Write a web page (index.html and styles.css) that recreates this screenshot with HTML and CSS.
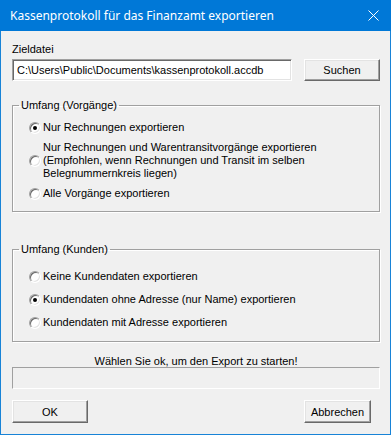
FILE: index.html
```html
<!DOCTYPE html>
<html lang="de">
<head>
    <meta charset="UTF-8">
    <meta name="viewport" content="width=device-width, initial-scale=1.0">
    <title>Kassenprotokoll für das Finanzamt exportieren</title>
    <link rel="stylesheet" href="styles.css">
</head>
<body>
    <div class="window">
        <div class="titlebar">
            <span class="title">Kassenprotokoll für das Finanzamt exportieren</span>
            <svg class="close" width="11" height="11" viewBox="0 0 11 11">
                <path d="M0.5 0.5 L10.5 10.5 M10.5 0.5 L0.5 10.5" stroke="#fff" stroke-width="1" fill="none"/>
            </svg>
        </div>

        <div class="content">
            <label class="field-label" for="target">Zieldatei</label>
            <div class="file-row">
                <input class="textbox" id="target" type="text" value="C:\Users\Public\Documents\kassenprotokoll.accdb">
                <button class="btn btn-search">Suchen</button>
            </div>

            <fieldset class="group group-vorgaenge">
                <legend>Umfang (Vorgänge)</legend>
                <label class="option">
                    <span class="radio checked"></span>
                    <span>Nur Rechnungen exportieren</span>
                </label>
                <label class="option">
                    <span class="radio"></span>
                    <span>Nur Rechnungen und Warentransitvorgänge exportieren<br>(Empfohlen, wenn Rechnungen und Transit im selben<br>Belegnummernkreis liegen)</span>
                </label>
                <label class="option">
                    <span class="radio"></span>
                    <span>Alle Vorgänge exportieren</span>
                </label>
            </fieldset>

            <fieldset class="group group-kunden">
                <legend>Umfang (Kunden)</legend>
                <label class="option">
                    <span class="radio"></span>
                    <span>Keine Kundendaten exportieren</span>
                </label>
                <label class="option">
                    <span class="radio checked"></span>
                    <span>Kundendaten ohne Adresse (nur Name) exportieren</span>
                </label>
                <label class="option">
                    <span class="radio"></span>
                    <span>Kundendaten mit Adresse exportieren</span>
                </label>
            </fieldset>

            <p class="status">Wählen Sie ok, um den Export zu starten!</p>
            <div class="progress"></div>

            <div class="actions">
                <button class="btn btn-ok">OK</button>
                <button class="btn btn-cancel">Abbrechen</button>
            </div>
        </div>
    </div>
</body>
</html>
```

FILE: styles.css
```css
* {
    box-sizing: border-box;
}
body {
    margin: 0;
    font-family: "Liberation Sans", Arial, sans-serif;
    font-size: 11px;
    color: #000;
    background: #f0f0f0;
}
.window {
    width: 391px;
    height: 435px;
    background: #f0f0f0;
    border: 1px solid #1883d7;
    border-top: none;
}
.titlebar {
    height: 31px;
    margin: 0 -1px;
    padding: 0 12px 0 10px;
    background: #0078d7;
    color: #fff;
    display: flex;
    align-items: center;
    justify-content: space-between;
}
.title {
    font-family: "Noto Sans", sans-serif;
    font-size: 12px;
}
.close {
    display: block;
}
.content {
    padding: 0 10px 0 11px;
}
.field-label {
    display: block;
    margin-top: 12px;
    line-height: 13px;
}
.file-row {
    display: flex;
    justify-content: space-between;
    margin-top: 3px;
}
.textbox {
    width: 280px;
    height: 22px;
    padding: 0 0 0 4px;
    font: inherit;
    color: #000;
    background: #fff;
    border: 1px solid;
    border-color: #a0a0a0 #fff #fff #a0a0a0;
    box-shadow: inset 1px 1px 0 #696969, inset -1px -1px 0 #e3e3e3;
    outline: none;
}
.btn {
    height: 22px;
    padding: 0;
    font: inherit;
    color: #000;
    background: #f0f0f0;
    border: 1px solid;
    border-color: #fff #696969 #696969 #fff;
    box-shadow: inset -1px -1px 0 #a0a0a0, inset 1px 1px 0 #e3e3e3;
}
.btn-search {
    width: 76px;
}
.group {
    margin: 0;
    padding: 0 0 11px 0;
    border: 1px solid #a0a0a0;
    box-shadow: 1px 1px 0 #fff, inset 1px 1px 0 #fff;
    display: flex;
    flex-direction: column;
}
.group legend {
    margin-left: 6px;
    padding: 0 2px;
    line-height: 13px;
}
.group-vorgaenge {
    margin-top: 18px;
    padding-top: 9px;
    gap: 7px;
}
.group-kunden {
    margin-top: 31px;
    padding-top: 14px;
    padding-bottom: 12px;
    gap: 10px;
}
.option {
    display: flex;
    align-items: center;
    line-height: 13px;
    padding-left: 16px;
}
.radio {
    flex: none;
    position: relative;
    width: 12px;
    height: 12px;
    margin-right: 2px;
    border-radius: 50%;
    background: #fff;
    border: 1px solid;
    border-color: #a0a0a0 #fff #fff #a0a0a0;
    box-shadow: inset 1px 1px 0 #696969, inset -1px -1px 0 #e3e3e3;
}
.radio.checked::after {
    content: "";
    position: absolute;
    left: 3px;
    top: 3px;
    width: 4px;
    height: 4px;
    border-radius: 50%;
    background: #000;
}
.status {
    margin: 14px 0 0;
    line-height: 11px;
    text-align: center;
}
.progress {
    height: 22px;
    border: 1px solid;
    border-color: #a0a0a0 #fff #fff #a0a0a0;
}
.actions {
    display: flex;
    justify-content: space-between;
    margin-top: 11px;
    padding-right: 9px;
}
.btn-ok {
    width: 76px;
    height: 23px;
}
.btn-cancel {
    width: 67px;
    height: 23px;
}
```
